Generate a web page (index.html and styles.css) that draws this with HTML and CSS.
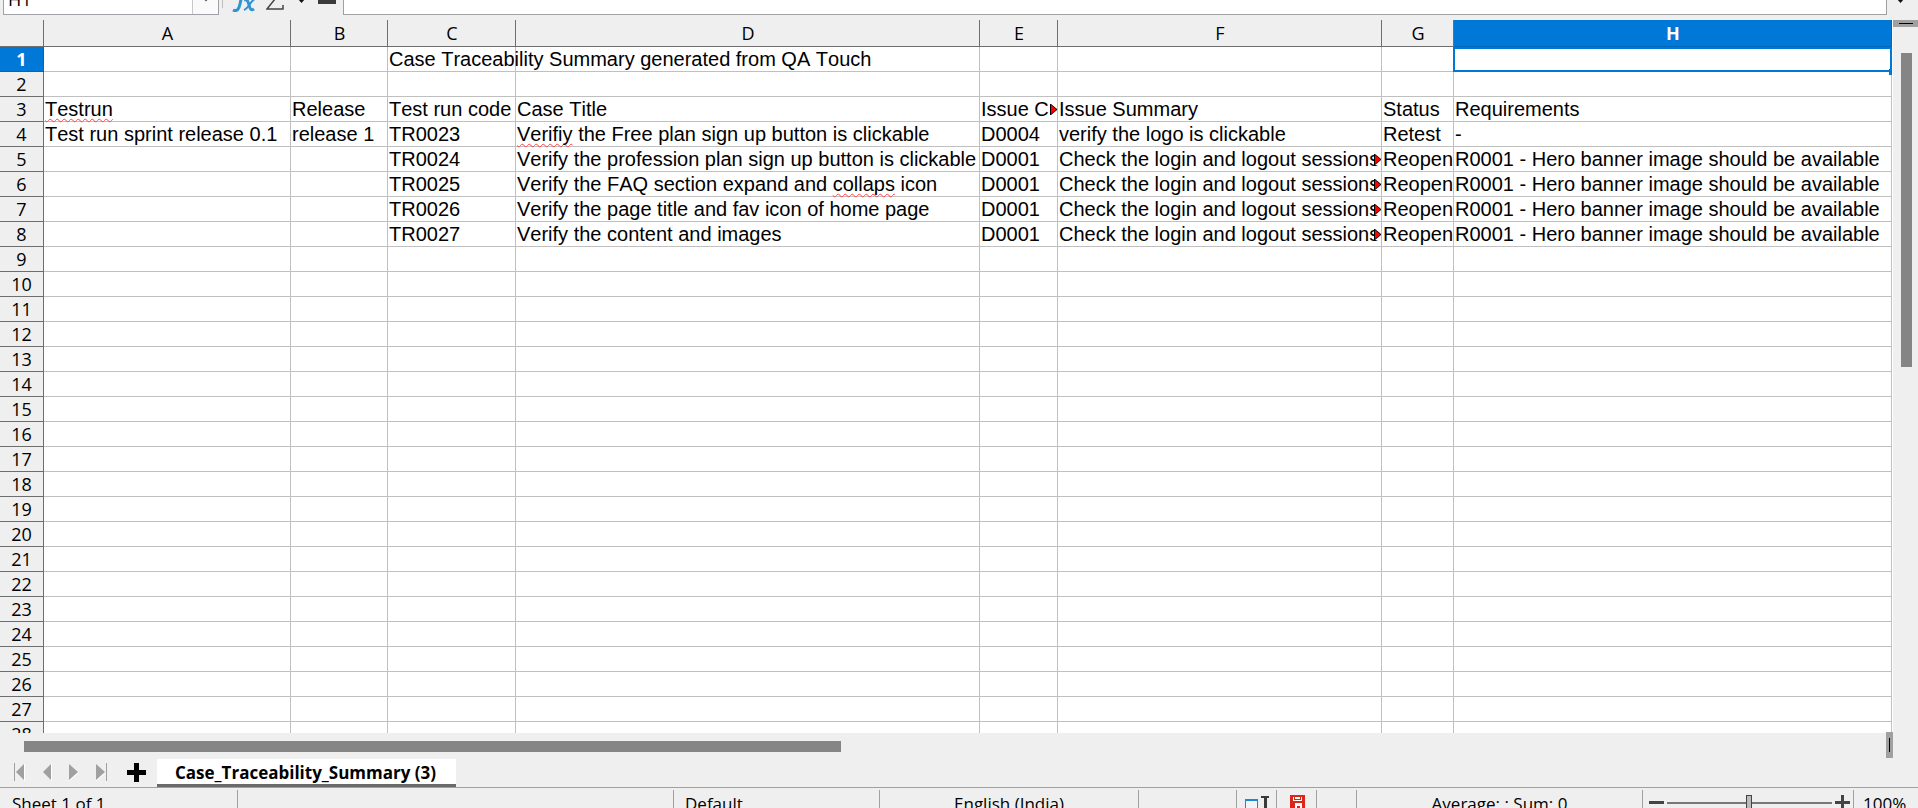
FILE: index.html
```
<!DOCTYPE html>
<html lang="en">
<head>
<meta charset="utf-8">
<title>Case Traceability Summary</title>
<link rel="stylesheet" href="styles.css">
</head>
<body>
<header class="formula-bar">
  <div class="name-box">
    <input class="name-input" type="text" value="H1" aria-label="Name box">
    <button class="name-drop" aria-label="Show named ranges"><svg width="10" height="6" viewBox="0 0 10 6"><path d="M1 0l4 4 4-4" fill="none" stroke="#555" stroke-width="2"/></svg></button>
  </div>
  <span class="bar-rule"></span>
  <button class="tool tool-fx" aria-label="Function wizard"><svg width="24" height="22" viewBox="0 0 24 22"><g fill="none" stroke="#2f93d4"><path d="M1 20c4 2 6-1 7-6l2-9c1-3 2-4 5-3" stroke-width="3"/><path d="M3 9h10" stroke-width="2"/><path d="M12 10c3-1 4 1 5 5s2 6 5 4" stroke-width="3"/><path d="M23 9c-4 1-6 9-11 11" stroke-width="2"/></g></svg></button>
  <button class="tool tool-sum" aria-label="Select function"><svg width="18" height="20" viewBox="0 0 18 20"><path d="M17 4V1H1l8 8-8 10h16v-4" fill="none" stroke="#444" stroke-width="1.500"/></svg></button>
  <button class="tool tool-drop" aria-label="Function list"><svg width="7" height="4" viewBox="0 0 7 4"><path d="M0 0h7L3.500 4z" fill="#111"/></svg></button>
  <button class="tool tool-eq" aria-label="Formula"><svg width="18" height="12" viewBox="0 0 18 12"><path d="M0 0h18v4H0zM0 8h18v4H0z" fill="#3a3a38"/></svg></button>
  <input class="formula-input" type="text" aria-label="Formula">
  <button class="expand" aria-label="Expand formula bar"><svg width="7" height="4" viewBox="0 0 7 4"><path d="M0 0h7L3.500 4z" fill="#111"/></svg></button>
</header>
<main class="workspace">
  <div class="sheet">
    <table class="grid">
      <colgroup><col class="w-row"><col class="w-a"><col class="w-b"><col class="w-c"><col class="w-d"><col class="w-e"><col class="w-f"><col class="w-g"><col></colgroup>
      <thead><tr><th></th><th>A</th><th>B</th><th>C</th><th>D</th><th>E</th><th>F</th><th>G</th><th class="active">H</th></tr></thead>
      <tbody id="rows"></tbody>
    </table>
  </div>
  <aside class="v-scroll"><div class="v-split"></div><div class="v-thumb"></div></aside>
</main>
<div class="h-scroll"><div class="h-thumb"></div><div class="h-split"></div></div>
<nav class="tabs">
  <button class="nav-btn" aria-label="First sheet"><svg width="12" height="18" viewBox="0 0 12 18"><path d="M0 0h1v18H0z" fill="#a0a0a0"/><path d="M10 1v16L2 9z" fill="#a0a0a0"/><path d="M10 1h1v17h-1z" fill="#fff"/></svg></button>
  <button class="nav-btn" aria-label="Previous sheet"><svg width="12" height="18" viewBox="0 0 12 18"><path d="M10 1v16L2 9z" fill="#a0a0a0"/><path d="M10 1h1v17h-1z" fill="#fff"/></svg></button>
  <button class="nav-btn" aria-label="Next sheet"><svg width="12" height="18" viewBox="0 0 12 18"><path d="M1 1v16l9-8z" fill="#a0a0a0"/><path d="M1 18l9-8" stroke="#fff"/></svg></button>
  <button class="nav-btn" aria-label="Last sheet"><svg width="12" height="18" viewBox="0 0 12 18"><path d="M1 1v16l9-8z" fill="#a0a0a0"/><path d="M11 0h1v18h-1z" fill="#a0a0a0"/><path d="M1 18l9-8" stroke="#fff"/></svg></button>
  <button class="add" aria-label="Add sheet"><svg width="19" height="19" viewBox="0 0 19 19"><path d="M7 0h5v7h7v5h-7v7H7v-7H0V7h7z"/></svg></button>
  <button class="tab">Case_Traceability_Summary (3)</button>
</nav>
<footer class="status">
  <div class="cell s-sheet">Sheet 1 of 1</div>
  <div class="cell s-blank"></div>
  <div class="cell s-style">Default</div>
  <div class="cell s-lang">English (India)</div>
  <div class="cell s-gap"></div>
  <div class="cell s-icon"><svg width="24" height="18" viewBox="0 0 24 18"><path d="M0 4h13v12H0z" fill="#1e88d2"/><path d="M1 6h11v9H1z" fill="#f4f4f4"/><path d="M16 1h8v2h-2v13h-3V3h-3z" fill="#3a3a38"/></svg></div>
  <div class="cell s-icon"><svg width="15" height="15" viewBox="0 0 15 15"><path d="M0 0h15v15H2l-2-2z" fill="#dc2618"/><path d="M3 2h1v3h7V2h1v4H3zM14 2h0v12zM5 8h7v7h-2v-4H7v4H5z" fill="#fff"/><path d="M5 2h5v2H5z" fill="#fff"/></svg></div>
  <div class="cell s-icon"></div>
  <div class="cell s-sum">Average: ; Sum: 0</div>
  <div class="cell s-zoom">
    <button class="z-btn" aria-label="Zoom out"><svg width="15" height="15" viewBox="0 0 15 15"><path d="M0 6h15v3H0z" fill="#444"/></svg></button>
    <input class="z-range" type="range" min="0" max="100" value="50" aria-label="Zoom">
    <button class="z-btn" aria-label="Zoom in"><svg width="15" height="15" viewBox="0 0 15 15"><path d="M0 6h15v3H0zM6 0h3v15H6z" fill="#444"/></svg></button>
  </div>
  <div class="s-pct">100%</div>
</footer>
<script src="sheet.js"></script>
</body>
</html>
```
FILE: sheet.js
```
const req = "R0001 - Hero banner image should be available";
const login = ">Check the login and logout sessions";
const data = {
  1: ["", "", "Case Traceability Summary generated from QA Touch"],
  3: ["~Testrun~", "Release", "Test run code", "Case Title", ">Issue C", "Issue Summary", "Status", "Requirements"],
  4: ["Test run sprint release 0.1", "release 1", "TR0023", "~Verifiy~ the Free plan sign up button is clickable", "D0004", "verify the logo is clickable", "Retest", "-"],
  5: ["", "", "TR0024", "Verify the profession plan sign up button is clickable", "D0001", login, "Reopen", req],
  6: ["", "", "TR0025", "Verify the FAQ section expand and ~collaps~ icon", "D0001", login, "Reopen", req],
  7: ["", "", "TR0026", "Verify the page title and fav icon of home page", "D0001", login, "Reopen", req],
  8: ["", "", "TR0027", "Verify the content and images", "D0001", login, "Reopen", req]
};
const arrow = '<svg class="more" width="7" height="11" viewBox="0 0 7 11"><path d="M0 0h1l6 5v1l-6 5H0z"/><path d="M1 1l5 4v1l-5 4z" fill="#f00"/></svg>';

// ~word~ marks a spelling error, a leading ">" marks text that runs past its cell
function cellHtml(text) {
  const cut = text.startsWith(">");
  const body = text.replace(/^>/, "").replace(/~(\w+)~/, '<span class="typo">$1</span>');
  return '<div class="val' + (cut ? " cut" : "") + '">' + body + (cut ? arrow : "") + "</div>";
}

let html = "";
for (let r = 1; r <= 28; r++) {
  html += '<tr><th' + (r === 1 ? ' class="active"' : "") + ">" + r + "</th>";
  for (let c = 0; c < 8; c++) {
    const text = (data[r] || [])[c] || "";
    const selected = r === 1 && c === 7;
    html += "<td" + (selected ? ' class="selected"' : "") + ">" + (text ? cellHtml(text) : "") + "</td>";
  }
  html += "</tr>";
}
document.getElementById("rows").innerHTML = html;
```
FILE: styles.css
```
* { box-sizing: border-box; }
body {
  margin: 0;
  height: 100vh;
  display: flex;
  flex-direction: column;
  overflow: hidden;
  background: #efefef;
  color: #000;
  font: 17px/24px "Open Sans", "Noto Sans", sans-serif;
}
button { border: 0; padding: 0; margin: 0; background: none; color: inherit; font: inherit; display: flex; }

.formula-bar {
  flex: none;
  height: 20px;
  padding: 0 14px 5px 3px;
  display: flex;
  align-items: flex-end;
  overflow: hidden;
}
.name-box { width: 216px; height: 32px; display: flex; border: 1px solid #a0a0a8; background: #fff; }
.name-input { flex: 1; min-width: 0; border: 0; padding: 0 4px; background: none; font: 18px/24px "Open Sans", sans-serif; }
.name-drop { width: 26px; border-left: 1px solid #c8c8c8; background: #fafafa; justify-content: center; align-items: center; }
.bar-rule { width: 1px; height: 32px; margin: 0 9px 7px 3px; background: #c0c0c0; }
.tool-fx { margin: 0 10px 3px 0; }
.tool-sum { margin: 0 14px 5px 0; }
.tool-drop { margin: 0 13px 12px 0; }
.tool-eq { margin: 0 7px 11px 0; }
.formula-input { flex: 1; min-width: 0; height: 32px; border: 1px solid #a0a0a0; background: #fff; }
.expand { margin: 0 0 12px 10px; }

.workspace { flex: 1; min-height: 0; display: flex; }
.sheet { flex: 1; min-width: 0; overflow: hidden; background: #fff; border-right: 1px solid #fff; }
.grid { width: 100%; table-layout: fixed; border-collapse: separate; border-spacing: 0; }
.w-row { width: 44px; }
.w-a { width: 247px; }
.w-b { width: 97px; }
.w-c { width: 128px; }
.w-d { width: 464px; }
.w-e { width: 78px; }
.w-f { width: 324px; }
.w-g { width: 72px; }
.grid th {
  padding: 0;
  height: 25px;
  border: solid #6e6e6e;
  border-width: 0 1px 1px 0;
  background: #efefef;
  font: 18px/24px "Open Sans", "Noto Sans", sans-serif;
  text-align: center;
}
.grid thead th { height: 27px; padding-left: 1px; line-height: 26px; }
.grid th.active { background: #0078d7; border-color: #0067b8; color: #fff; font-weight: 700; }
.grid td {
  padding: 0;
  height: 25px;
  border: solid #c0c0c0;
  border-width: 0 1px 1px 0;
  font: 20px/24px "Liberation Sans", Arial, sans-serif;
  font-kerning: none;
}
.val { position: relative; height: 24px; padding-left: 1px; white-space: nowrap; }
.cut { overflow: hidden; }
.more { position: absolute; right: 0; top: 7px; background: #fff; }
.typo { text-decoration: underline wavy #f44 1px; text-underline-offset: 2px; text-decoration-skip-ink: none; }
.grid td.selected { position: relative; }
.selected::before { content: ""; position: absolute; inset: 0 -1px -1px -1px; border: 2px solid #0078d7; }
.selected::after { content: ""; position: absolute; right: -2px; bottom: -4px; width: 4px; height: 6px; background: #0078d7; }

.v-scroll { flex: none; width: 25px; display: flex; flex-direction: column; align-items: center; }
.v-split { width: 100%; height: 7px; margin-bottom: 26px; background: linear-gradient(#000, #000) center / 14px 1px no-repeat #a0a0a0; }
.v-thumb { width: 11px; height: 44%; margin-left: 2px; background: #858585; }

.h-scroll { flex: none; height: 26px; margin-top: -1px; padding: 0 25px 0 24px; display: flex; justify-content: space-between; align-items: flex-start; }
.h-thumb { width: 43.7%; height: 11px; margin-top: 9px; background: #858585; }
.h-split { width: 7px; height: 26px; position: relative; background: linear-gradient(#000, #000) center / 1px 14px no-repeat #a0a0a0; }

.tabs { flex: none; height: 30px; padding-left: 14px; display: flex; align-items: flex-end; border-bottom: 1px solid #a0a0a0; }
.nav-btn { margin: 0 15px 6px 0; }
.add { margin: 0 11px 5px 5px; }
.tab { height: 28px; padding: 2px 20px 0 18px; border-bottom: 3px solid #6a6a6a; background: #fff; font-weight: 700; align-items: center; }

.status { flex: none; height: 20px; padding-top: 2px; display: flex; overflow: hidden; font-size: 17px; white-space: nowrap; }
.cell { height: 30px; padding-top: 2px; border-right: 1px solid #a0a0a0; }
.s-sheet { width: 238px; padding-left: 12px; }
.s-blank { flex: 1; }
.s-style { width: 206px; padding-left: 11px; }
.s-lang { width: 259px; text-align: center; }
.s-gap { width: 98px; }
.s-icon { width: 40px; display: flex; justify-content: center; align-items: flex-start; padding: 5px 0 0 1px; }
.s-sum { width: 286px; text-align: center; }
.s-zoom { width: 211px; display: flex; align-items: flex-start; justify-content: center; gap: 3px; padding: 5px 0 0 2px; }
.z-range { appearance: none; width: 165px; height: 15px; margin: 0; background: linear-gradient(#777, #777) center / 100% 2px no-repeat; }
.z-range::-webkit-slider-thumb { appearance: none; width: 6px; height: 15px; border: 1px solid #444; background: #bbb; }
.s-pct { width: 64px; padding: 2px 0 0 9px; }
```
